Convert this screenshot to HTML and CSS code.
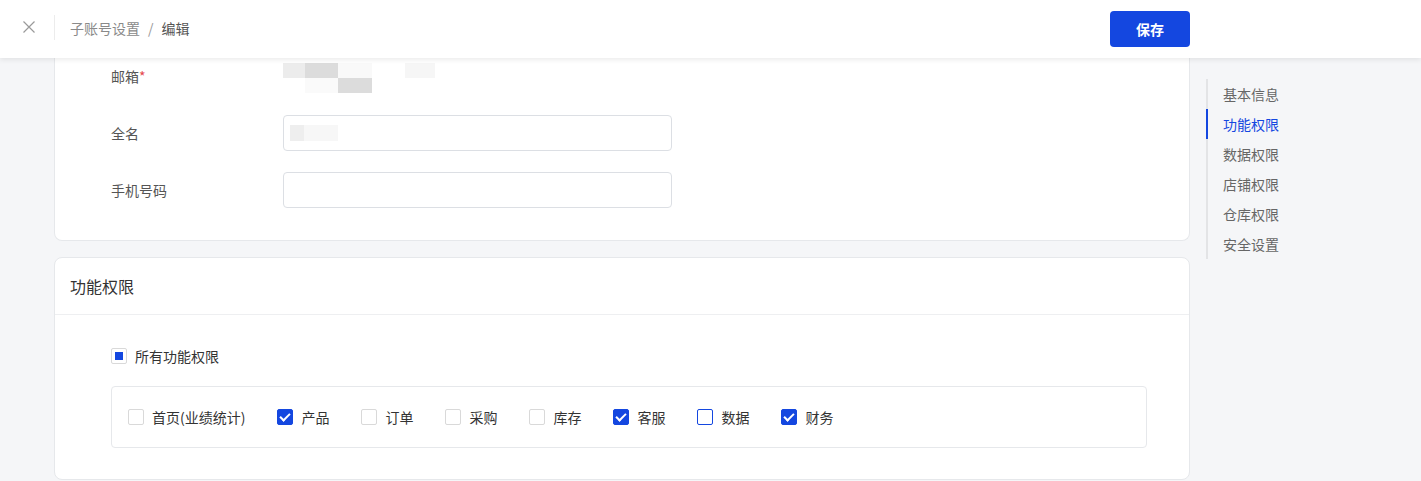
FILE: index.html
```html
<!DOCTYPE html>
<html lang="zh-CN">
<head>
    <meta charset="UTF-8">
    <meta name="viewport" content="width=device-width, initial-scale=1.0">
    <title>子账号设置 - 编辑</title>
    <link rel="stylesheet" href="styles.css">
</head>
<body>
    <!-- Top bar -->
    <div class="topbar">
        <div class="topbar-left">
            <span class="close-btn">
                <svg width="14" height="14" viewBox="0 0 14 14"><path d="M1.5 1.5 L12.5 12.5 M12.5 1.5 L1.5 12.5" stroke="#9a9a9a" stroke-width="1.2" fill="none"/></svg>
            </span>
            <span class="divider"></span>
            <span class="crumb">子账号设置</span>
            <span class="crumb-sep">/</span>
            <span class="crumb current">编辑</span>
        </div>
        <button class="save-btn">保存</button>
    </div>

    <div class="layout">
        <div class="main">
            <!-- Basic info -->
            <div class="card card-top">
                <div class="form-row">
                    <label>邮箱<span class="req">*</span></label>
                    <div class="mosaic">
                        <span class="m m1"></span><span class="m m2"></span><span class="m m0"></span><span class="m"></span><span class="m m4"></span>
                        <span class="m"></span><span class="m m5"></span><span class="m m3"></span><span class="m"></span><span class="m"></span>
                    </div>
                </div>
                <div class="form-row">
                    <label>全名</label>
                    <div class="input">
                        <span class="blur-val"></span>
                    </div>
                </div>
                <div class="form-row">
                    <label>手机号码</label>
                    <div class="input"></div>
                </div>
            </div>

            <!-- Function permissions -->
            <div class="card">
                <div class="card-head">功能权限</div>
                <div class="card-body">
                    <div class="check-item all">
                        <span class="box indeterminate"></span>
                        <span>所有功能权限</span>
                    </div>
                    <div class="check-group">
                        <div class="check-item"><span class="box"></span><span>首页(业绩统计)</span></div>
                        <div class="check-item"><span class="box checked"></span><span>产品</span></div>
                        <div class="check-item"><span class="box"></span><span>订单</span></div>
                        <div class="check-item"><span class="box"></span><span>采购</span></div>
                        <div class="check-item"><span class="box"></span><span>库存</span></div>
                        <div class="check-item"><span class="box checked"></span><span>客服</span></div>
                        <div class="check-item"><span class="box focus"></span><span>数据</span></div>
                        <div class="check-item"><span class="box checked"></span><span>财务</span></div>
                    </div>
                </div>
            </div>
        </div>

        <!-- Anchor nav -->
        <div class="side-nav">
            <a>基本信息</a>
            <a class="active">功能权限</a>
            <a>数据权限</a>
            <a>店铺权限</a>
            <a>仓库权限</a>
            <a>安全设置</a>
        </div>
    </div>
</body>
</html>
```

FILE: styles.css
```css
body {
    font-family: "Noto Sans CJK SC", "Noto Sans", Arial, sans-serif;
    font-size: 14px;
    color: #333;
    background-color: #f5f6f8;
    margin: 0;
    padding: 0;
    height: 481px;
    overflow: hidden;
}
.topbar {
    position: relative;
    z-index: 2;
    height: 58px;
    background: #ffffff;
    box-shadow: 0 2px 5px rgba(0, 0, 0, 0.08);
    display: flex;
    align-items: center;
    justify-content: space-between;
    padding: 0 231px 0 22px;
}
.topbar-left {
    display: flex;
    align-items: center;
    margin-top: -3px;
}
.close-btn {
    display: flex;
    width: 14px;
    height: 14px;
    margin-top: -1px;
}
.divider {
    width: 1px;
    height: 25px;
    background: #ececec;
    margin: 0 15px 0 18px;
}
.crumb {
    color: #8a8a8a;
    line-height: 22px;
}
.crumb.current {
    color: #555;
}
.crumb-sep {
    color: #999;
    margin: 0 8px;
}
.save-btn {
    width: 80px;
    height: 36px;
    border: none;
    border-radius: 4px;
    background-color: #1447e0;
    color: #fff;
    font-family: inherit;
    font-size: 14px;
    font-weight: bold;
    cursor: pointer;
    margin-top: -1px;
}
.layout {
    display: flex;
    padding-left: 54px;
    gap: 16px;
}
.main {
    width: 1136px;
    display: flex;
    flex-direction: column;
    gap: 16px;
}
.card {
    background: #fff;
    border: 1px solid #e6e8eb;
    border-radius: 8px;
}
.card-top {
    border-top: none;
    border-radius: 0 0 8px 8px;
    padding: 0 0 32px 56px;
}
.form-row {
    display: flex;
    align-items: center;
    height: 36px;
    margin-bottom: 21px;
}
.form-row:last-child {
    margin-bottom: 0;
}
.form-row label {
    width: 172px;
    color: #555;
}
.req {
    color: #e5484d;
}
.mosaic {
    display: grid;
    grid-template-columns: 22px 33px 34px 33px 30px;
    grid-template-rows: 15px 15px;
    margin-top: 4px;
}
.m0 { background: #f9f9f9; }
.m1 { background: #ececec; }
.m2 { background: #dcdcdc; }
.m3 { background: #dcdcdc; }
.m4 { background: #f6f6f6; }
.m5 { background: #fafafa; }
.input {
    box-sizing: border-box;
    width: 389px;
    height: 36px;
    border: 1px solid #dcdfe4;
    border-radius: 4px;
    display: flex;
    align-items: center;
    padding-left: 6px;
}
.blur-val {
    width: 48px;
    height: 16px;
    background: linear-gradient(to right, #eeeeee 0, #eeeeee 14px, #f7f7f7 14px);
}
.card-head {
    height: 56px;
    line-height: 56px;
    padding-left: 15px;
    font-size: 16px;
    color: #333;
    border-bottom: 1px solid #eeeff1;
}
.card-body {
    padding: 30px 42px 31px 56px;
}
.check-item {
    display: flex;
    align-items: center;
    gap: 8px;
    line-height: 22px;
    color: #333;
}
.check-item.all {
    margin-bottom: 19px;
}
.box {
    width: 14px;
    height: 14px;
    border: 1px solid #d9d9d9;
    border-radius: 2px;
    background: #fff;
    position: relative;
}
.box.checked {
    background: #1447e0;
    border-color: #1447e0;
}
.box.checked::after {
    content: "";
    position: absolute;
    left: 4px;
    top: 1px;
    width: 4px;
    height: 8px;
    border: solid #fff;
    border-width: 0 2px 2px 0;
    transform: rotate(45deg);
}
.box.indeterminate::after {
    content: "";
    position: absolute;
    left: 3px;
    top: 3px;
    width: 8px;
    height: 8px;
    background: #1447e0;
}
.box.focus {
    border-color: #1447e0;
}
.check-group {
    border: 1px solid #e6e8eb;
    border-radius: 4px;
    padding: 19px 16px;
    display: flex;
    gap: 32px;
}
.side-nav {
    margin-top: 21px;
    border-left: 2px solid #e3e4e6;
    height: 180px;
    display: flex;
    flex-direction: column;
}
.side-nav a {
    line-height: 30px;
    padding-left: 15px;
    color: #666;
    margin-left: -2px;
    border-left: 2px solid transparent;
}
.side-nav a.active {
    color: #1447e0;
    border-left-color: #1447e0;
}
```
